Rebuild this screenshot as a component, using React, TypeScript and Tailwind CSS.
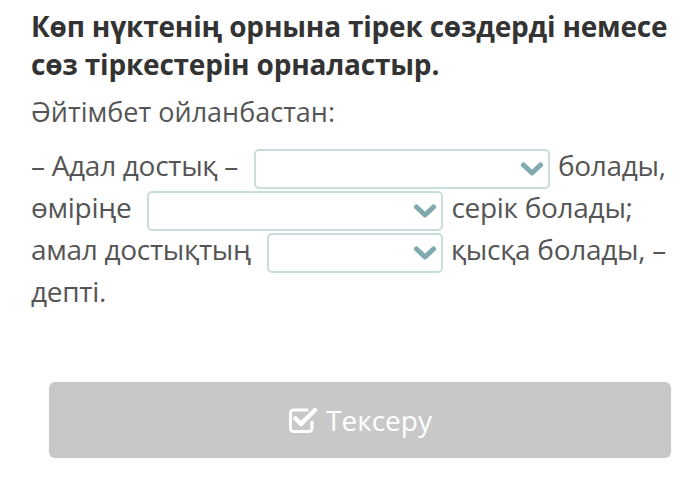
const Chevron = () => (
  <svg width="24" height="16" viewBox="0 0 24 16" className="absolute right-[4px] top-1/2 -translate-y-1/2">
    <path d="M3.5 4 L12 12 L20.5 4" fill="none" stroke="#7fa9ad" strokeWidth="5" strokeLinecap="round" strokeLinejoin="round" />
  </svg>
);

const Blank = ({ width }: { width: string }) => (
  <span className={`relative -my-[4px] ml-[9px] mr-[1px] inline-block h-[40px] ${width} rounded-[5px] border-2 border-[#c9dcdc] bg-white align-middle`}>
    <Chevron />
  </span>
);

const CheckSquare = () => (
  <svg width="30" height="28" viewBox="0 0 30 28">
    <path d="M19 4 H5.5 A3 3 0 0 0 2.5 7 V22.5 A3 3 0 0 0 5.5 25.5 H21 A3 3 0 0 0 24 22.5 V16" fill="none" stroke="white" strokeWidth="3" strokeLinecap="round" />
    <path d="M7.5 12.5 L13 18 L27 4" fill="none" stroke="white" strokeWidth="4.5" strokeLinecap="round" strokeLinejoin="round" />
  </svg>
);

export default function App() {
  return (
    <div className="h-[485px] w-[699px] bg-white pl-[31px] pr-[20px] pt-[7px]" style={{ fontFamily: '"Open Sans", sans-serif' }}>
      <h1 className="pr-[6px] text-[28px] font-bold leading-[38px] tracking-[-0.2px] text-[#333]">
        Көп нүктенің орнына тірек сөздерді немесе сөз тіркестерін орналастыр.
      </h1>
      <p className="mt-[11px] text-[27px] leading-[36px] text-[#555]">Әйтімбет ойланбастан:</p>
      <p className="mt-[14px] text-[28px] leading-[42px] tracking-[-0.3px] text-[#555]">
        – Адал достық – <Blank width="w-[296px]" /> болады, өміріңе <Blank width="w-[296px]" /> серік болады; амал достықтың{' '}
        <Blank width="w-[176px]" /> қысқа болады, – депті.
      </p>
      <div className="ml-[18px] mt-[70px] flex h-[76px] w-[622px] items-center justify-center gap-[8px] rounded-[6px] bg-[#c8c8c8] text-white">
        <CheckSquare />
        <span className="text-[28px]">Тексеру</span>
      </div>
    </div>
  );
}
